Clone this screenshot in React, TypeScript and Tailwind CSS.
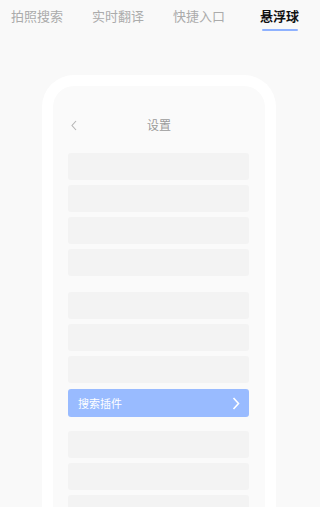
const font = { fontFamily: '"Noto Sans CJK SC", "Noto Sans", sans-serif' };

const tabs = ['拍照搜索', '实时翻译', '快捷入口'];

function Row({ children }: { children?: React.ReactNode }) {
  return <div className="h-[27px] rounded-[3px] bg-[#f3f3f3]">{children}</div>;
}

export default function App() {
  return (
    <div className="h-[507px] w-[320px] overflow-hidden bg-[#f9f9f9]" style={font}>
      {/* Tabs */}
      <div className="flex items-start pl-[11px] pt-[6px] h-[40px]">
        <div className="flex gap-[29px]">
          {tabs.map(t => (
            <div key={t} className="text-[13px] leading-[20px] text-[#ababab]">{t}</div>
          ))}
        </div>
        <div className="ml-[35px] flex flex-col items-center">
          <div className="text-[13px] leading-[20px] font-bold text-[#111]">悬浮球</div>
          <div className="mt-[3px] h-[2px] w-[36px] rounded-full bg-[#8fb2ff]" />
        </div>
      </div>

      {/* Phone */}
      <div className="ml-[42px] mt-[35px] w-[234px] h-[500px] rounded-t-[32px] border-[11px] border-b-0 border-white bg-[#fafafa]">
        <div className="relative flex h-[22px] items-center justify-center mt-[28px]">
          <svg className="absolute left-[18px] top-[6px]" width="6" height="11" viewBox="0 0 6 11" fill="none">
            <path d="M5 1 L1 5.5 L5 10" stroke="#b5b5b5" strokeWidth="1.1" />
          </svg>
          <div className="text-[12px] text-[#9a9a9a]">设置</div>
        </div>

        <div className="mt-[17px] pl-[15px] pr-[16px]">
          <div className="flex flex-col gap-[5px]">
            <Row />
            <Row />
            <Row />
            <Row />
          </div>
          <div className="mt-[16px] flex flex-col gap-[5px]">
            <Row />
            <Row />
            <Row />
          </div>
          <div className="mt-[6px] flex h-[28px] items-center justify-between rounded-[3px] bg-[#99bbff] pl-[10px] pr-[9px]">
            <span className="text-[11px] text-white">搜索插件</span>
            <svg width="8" height="13" viewBox="0 0 8 13" fill="none">
              <path d="M1.5 1 L6.5 6.5 L1.5 12" stroke="#ffffff" strokeWidth="1.6" />
            </svg>
          </div>
          <div className="mt-[14px] flex flex-col gap-[5px]">
            <Row />
            <Row />
            <Row />
          </div>
        </div>
      </div>
    </div>
  );
}
